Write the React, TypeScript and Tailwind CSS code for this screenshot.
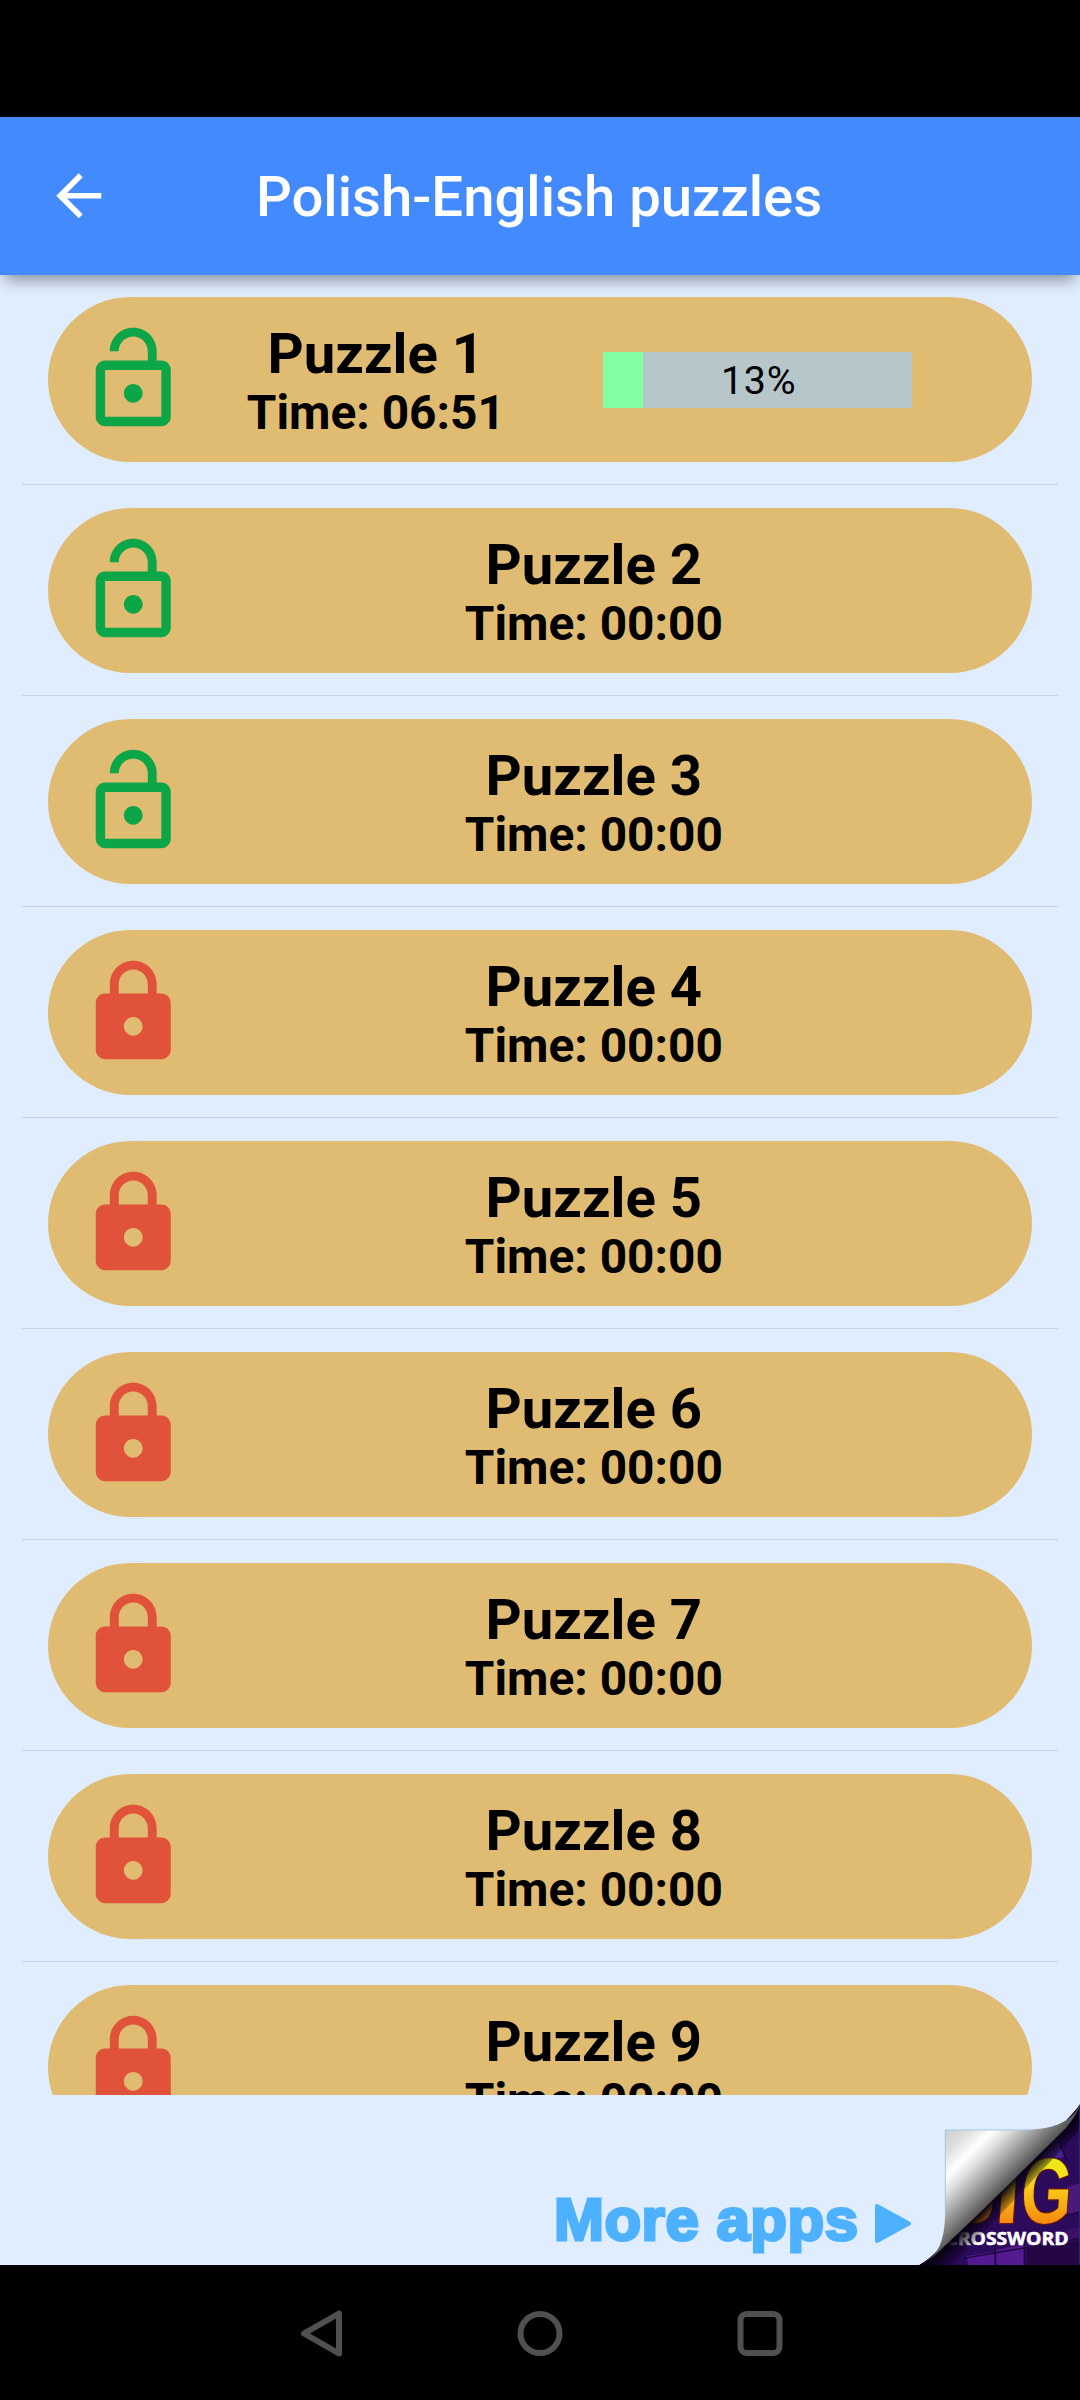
type Puzzle = {
  id: number;
  time: string;
  unlocked: boolean;
  progress?: number;
};

const puzzles: Puzzle[] = [
  { id: 1, time: '06:51', unlocked: true, progress: 13 },
  { id: 2, time: '00:00', unlocked: true },
  { id: 3, time: '00:00', unlocked: true },
  { id: 4, time: '00:00', unlocked: false },
  { id: 5, time: '00:00', unlocked: false },
  { id: 6, time: '00:00', unlocked: false },
  { id: 7, time: '00:00', unlocked: false },
  { id: 8, time: '00:00', unlocked: false },
  { id: 9, time: '00:00', unlocked: false },
];

const LockIcon = ({ open }: { open: boolean }) => (
  <svg
    className={`h-[112.5px] w-[112.5px] shrink-0 ${open ? 'text-[#0ca548]' : 'text-[#e0533a]'}`}
    viewBox="0 0 24 24"
    fill="currentColor"
  >
    {open ? (
      <path d="M12 17c1.1 0 2-.9 2-2s-.9-2-2-2-2 .9-2 2 .9 2 2 2zm6-9h-1V6c0-2.76-2.24-5-5-5S7 3.24 7 6h1.9c0-1.71 1.39-3.1 3.1-3.1 1.71 0 3.1 1.39 3.1 3.1v2H6c-1.1 0-2 .9-2 2v10c0 1.1.9 2 2 2h12c1.1 0 2-.9 2-2V10c0-1.1-.9-2-2-2zm0 12H6V10h12v10z" />
    ) : (
      <path d="M18 8h-1V6c0-2.76-2.24-5-5-5S7 3.24 7 6v2H6c-1.1 0-2 .9-2 2v10c0 1.1.9 2 2 2h12c1.1 0 2-.9 2-2V10c0-1.1-.9-2-2-2zm-6 9c-1.1 0-2-.9-2-2s.9-2 2-2 2 .9 2 2-.9 2-2 2zm3.1-9H8.9V6c0-1.71 1.39-3.1 3.1-3.1 1.71 0 3.1 1.39 3.1 3.1v2z" />
    )}
  </svg>
);

const Header = () => (
  <header className="relative z-10 flex h-[157.5px] shrink-0 items-center bg-[#448aff] px-[45px] shadow-[0_10px_14px_-5px_rgba(0,0,0,0.4)]">
    <svg className="h-[67.5px] w-[67.5px] text-white" viewBox="0 0 24 24" fill="currentColor">
      <path d="M20 11H7.83l5.59-5.59L12 4l-8 8 8 8 1.41-1.41L7.83 13H20v-2z" />
    </svg>
    <h1 className="mr-[69.5px] flex-1 pt-[3px] text-center text-[56.25px] leading-none font-medium text-white">
      Polish-English puzzles
    </h1>
  </header>
);

const ProgressBar = ({ value }: { value: number }) => (
  <div className="relative mr-[87px] h-[56px] w-[309px] bg-[#b7c6cb]">
    <div className="h-full bg-[#82ffa0]" style={{ width: `${value}%` }} />
    <span className="absolute inset-0 flex items-center justify-center pt-[2px] pl-[3px] text-[39.4px] leading-none tracking-[0.7px]">
      {value}%
    </span>
  </div>
);

const PuzzleRow = ({ puzzle }: { puzzle: Puzzle }) => (
  <li className="flex h-[210.9375px] shrink-0 flex-col">
    <div className="mx-[48.4px] mt-[22.5px] flex h-[166.4px] items-center rounded-full bg-[#e0bb72] pr-[33px] pl-[28.2px]">
      <LockIcon open={puzzle.unlocked} />
      <div className={`flex-1 pt-[2px] text-center font-bold ${puzzle.progress ? 'pr-[40px]' : ''}`}>
        <p className="text-[56.25px] leading-[66px]">Puzzle {puzzle.id}</p>
        <p className="-mt-px text-[47.8px] leading-[54px]">Time: {puzzle.time}</p>
      </div>
      {puzzle.progress && <ProgressBar value={puzzle.progress} />}
    </div>
    <div className="mt-[22px] mr-[22.5px] ml-[22px] h-px shrink-0 bg-[#c6d3e6]" />
  </li>
);

// Page corner that curls up over the advertised game
const PageCurl = () => (
  <svg className="h-[170px] w-[162px]" viewBox="114 75 486 510">
    <defs>
      <linearGradient id="curl" gradientUnits="userSpaceOnUse" x1="195" y1="180" x2="375" y2="360">
        <stop offset="0" stopColor="#cfcfcf" />
        <stop offset="0.2" stopColor="#dedede" />
        <stop offset="0.4" stopColor="#ffffff" />
        <stop offset="0.55" stopColor="#dcdcdc" />
        <stop offset="0.8" stopColor="#8f8f8f" />
        <stop offset="1" stopColor="#505050" />
      </linearGradient>
      <linearGradient id="gold" gradientUnits="userSpaceOnUse" x1="0" y1="255" x2="0" y2="460">
        <stop offset="0" stopColor="#e6ee1c" />
        <stop offset="0.35" stopColor="#fbdc1c" />
        <stop offset="1" stopColor="#f5880f" />
      </linearGradient>
      <linearGradient id="shade" gradientUnits="userSpaceOnUse" x1="366" y1="366" x2="408" y2="408">
        <stop offset="0" stopColor="#05000f" stopOpacity="0.95" />
        <stop offset="1" stopColor="#05000f" stopOpacity="0" />
      </linearGradient>
      <clipPath id="corner">
        <path d="M118 585C165 560 190 520 220 490L560 150C580 130 592 115 600 103V585Z" />
      </clipPath>
    </defs>
    <g clipPath="url(#corner)">
      <rect x="114" y="75" width="486" height="510" fill="#2c0a5c" />
      <path d="M475 235L535 195L552 262L480 270Z" fill="#45228f" />
      <path d="M560 350L600 340V430L545 436Z" fill="#4d187c" />
      <path d="M345 540L600 470V585H345Z" fill="#3d1069" />
      <path d="M260 558L345 545V585H265Z" fill="#551a93" />
      <path d="M350 540L430 525V585H350Z" fill="#551a8f" />
      <path d="M440 535L520 520L600 510V585H440Z" fill="#260746" />
      <path d="M250 565L600 505M345 500V585M435 500V585M520 180L560 270M540 440L600 426" stroke="#1b053b" strokeWidth="4" fill="none" />
      <g
        transform="translate(30 0) skewX(-4)"
        fontFamily="Liberation Sans, sans-serif"
        fontWeight="700"
        fontSize="278"
        fill="url(#gold)"
        stroke="#6b1a0a"
        strokeWidth="7"
        paintOrder="stroke"
        strokeLinejoin="round"
      >
        <text x="206" y="460" textLength="138" lengthAdjust="spacingAndGlyphs">B</text>
        <text x="343" y="460" textLength="76" lengthAdjust="spacingAndGlyphs">I</text>
        <text x="420" y="460" textLength="152" lengthAdjust="spacingAndGlyphs">G</text>
      </g>
      <text
        x="196"
        y="524"
        fontFamily="Open Sans, sans-serif"
        fontWeight="700"
        fontSize="54"
        fill="#fff"
        stroke="#fff"
        strokeWidth="1.500"
        textLength="370"
        lengthAdjust="spacingAndGlyphs"
      >
        CROSSWORD
      </text>
      <path d="M114 585L600 90V180L220 585Z" fill="url(#shade)" />
      <path d="M598 103V585" stroke="#27306b" strokeWidth="3" />
    </g>
    <path
      d="M118 585C170 560 192 525 195 440V180H430C530 179 580 150 600 103C595 122 580 148 558 174C450 280 310 420 222 502C185 535 155 572 118 585Z"
      fill="url(#curl)"
    />
    <path d="M196 420V180H450" fill="none" stroke="#8fc4ea" strokeWidth="2.500" />
  </svg>
);

const Footer = () => (
  <footer className="flex h-[170px] shrink-0 items-start justify-end">
    <a
      href="#more"
      className="mt-[95px] mr-[15px] font-['Liberation_Sans',sans-serif] text-[60px] leading-[60px] font-bold tracking-[0.5px] text-[#4db1ff] [-webkit-text-stroke:3px_#4db1ff]"
    >
      More apps
    </a>
    <svg className="mt-[107.5px] mr-[6.5px] h-[41px] w-[38px]" viewBox="0 0 38 41">
      <path d="M3 3L35 20.500L3 38Z" fill="#4db1ff" stroke="#4db1ff" strokeWidth="4" strokeLinejoin="round" />
    </svg>
    <PageCurl />
  </footer>
);

const NavigationBar = () => (
  <nav className="flex h-[135px] shrink-0 items-center justify-center gap-[172px] bg-black">
    <svg className="h-12 w-12" viewBox="0 0 48 48" fill="none" stroke="#505050" strokeWidth="6" strokeLinejoin="round">
      <path d="M8 24.500L43 4.500V44.500Z" />
    </svg>
    <svg className="h-12 w-12" viewBox="0 0 48 48" fill="none" stroke="#505050" strokeWidth="6">
      <circle cx="24" cy="24.500" r="19.500" />
    </svg>
    <svg className="h-12 w-12" viewBox="0 0 48 48" fill="none" stroke="#505050" strokeWidth="6">
      <rect x="4.500" y="5" width="39" height="39" rx="6" />
    </svg>
  </nav>
);

const App = () => {
  return (
    <div className="flex h-[2400px] w-[1080px] flex-col overflow-hidden bg-[#e0edff] font-[Roboto,sans-serif] text-black">
      <div className="h-[117px] shrink-0 bg-black" />
      <Header />
      <ul className="flex min-h-0 flex-1 flex-col overflow-hidden">
        {puzzles.map((puzzle) => (
          <PuzzleRow key={puzzle.id} puzzle={puzzle} />
        ))}
      </ul>
      <Footer />
      <NavigationBar />
    </div>
  );
};

export default App;
